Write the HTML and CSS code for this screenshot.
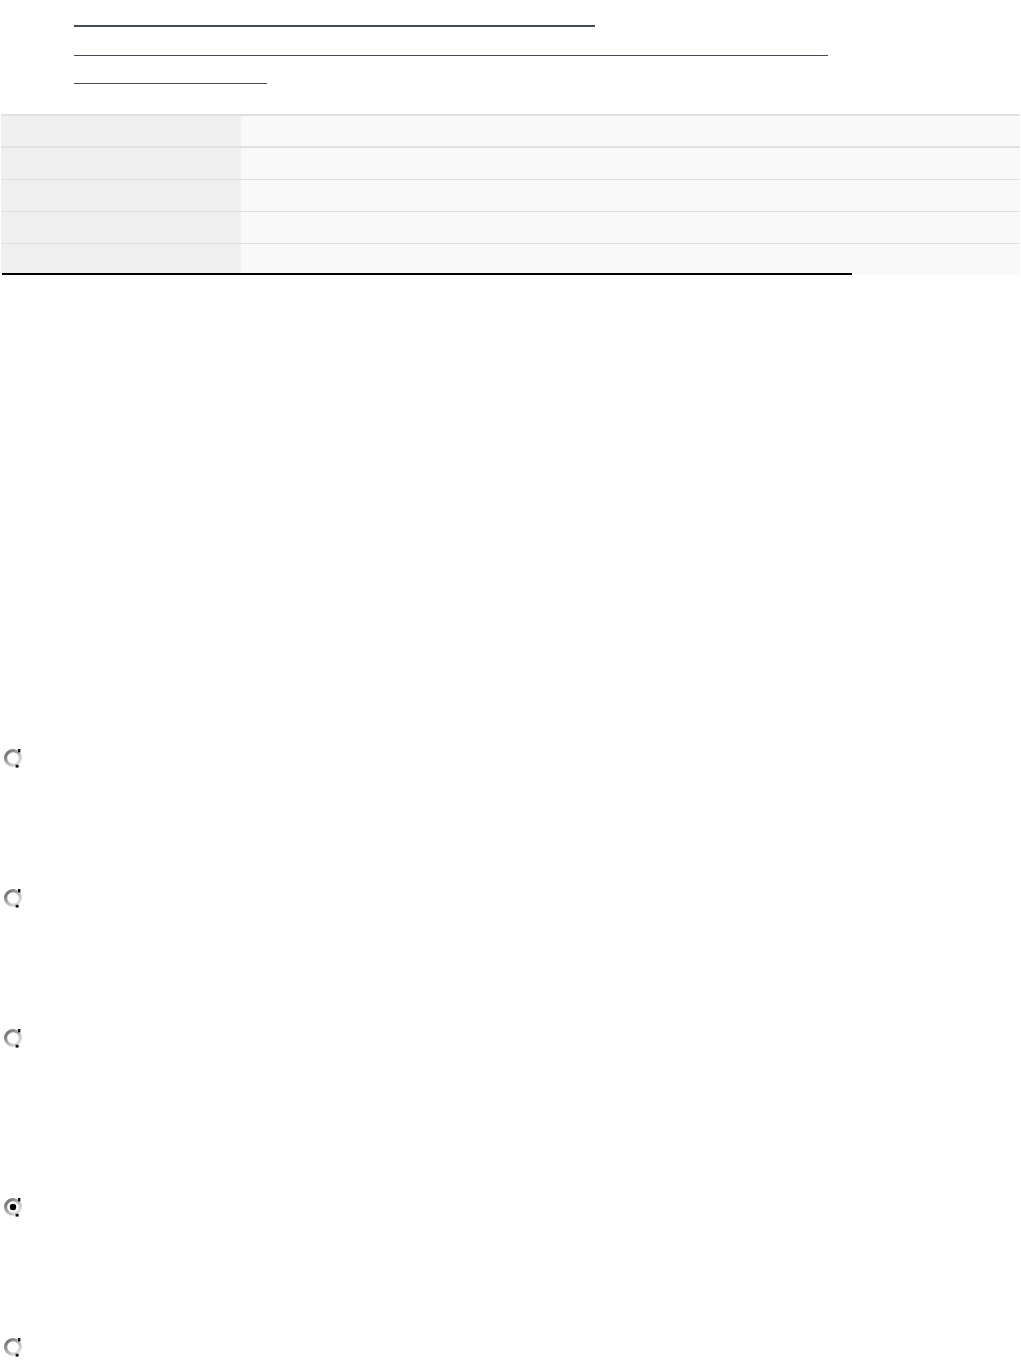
FILE: index.html
```html
<!DOCTYPE html>
<html lang="en">
<head>
<meta charset="utf-8">
<title>Page</title>
<link rel="stylesheet" href="styles.css">
</head>
<body>
<div class="links">
  <div class="rule rule-1"></div>
  <div class="rule rule-2"></div>
  <div class="rule rule-3"></div>
</div>

<div class="table">
  <div class="row head"><div class="cell key"></div><div class="cell val"></div></div>
  <div class="row"><div class="cell key"></div><div class="cell val"></div></div>
  <div class="row"><div class="cell key"></div><div class="cell val"></div></div>
  <div class="row"><div class="cell key"></div><div class="cell val"></div></div>
  <div class="row last"><div class="cell key"></div><div class="cell val"></div></div>
</div>
<div class="underbar"></div>

<div class="options">
  <div class="opt">
    <svg class="radio" viewBox="0 0 20 20" width="20" height="20"><defs><linearGradient id="g1" x1="0" y1="0" x2="1" y2="1"><stop offset="0" stop-color="#5e5e5e"/><stop offset="0.5" stop-color="#b4b4b4"/><stop offset="1" stop-color="#ededed"/></linearGradient></defs><circle cx="10" cy="10" r="7.4" fill="#fff" stroke="url(#g1)" stroke-width="3.2"/><rect x="15" y="1" width="2.4" height="3.4" fill="#111"/><rect x="12.6" y="16.8" width="3" height="2.8" fill="#111"/></svg>
  </div>
  <div class="opt">
    <svg class="radio" viewBox="0 0 20 20" width="20" height="20"><circle cx="10" cy="10" r="7.4" fill="#fff" stroke="url(#g1)" stroke-width="3.2"/><rect x="15" y="1" width="2.4" height="3.4" fill="#111"/><rect x="12.6" y="16.8" width="3" height="2.8" fill="#111"/></svg>
  </div>
  <div class="opt opt-tall">
    <svg class="radio" viewBox="0 0 20 20" width="20" height="20"><circle cx="10" cy="10" r="7.4" fill="#fff" stroke="url(#g1)" stroke-width="3.2"/><rect x="15" y="1" width="2.4" height="3.4" fill="#111"/><rect x="12.6" y="16.8" width="3" height="2.8" fill="#111"/></svg>
  </div>
  <div class="opt">
    <svg class="radio" viewBox="0 0 20 20" width="20" height="20"><circle cx="10" cy="10" r="7.4" fill="#fff" stroke="url(#g1)" stroke-width="3.2"/><circle cx="10" cy="10" r="3.2" fill="#000"/><rect x="15" y="1" width="2.4" height="3.4" fill="#111"/><rect x="12.6" y="16.8" width="3" height="2.8" fill="#111"/></svg>
  </div>
  <div class="opt opt-end">
    <svg class="radio" viewBox="0 0 20 20" width="20" height="20"><circle cx="10" cy="10" r="7.4" fill="#fff" stroke="url(#g1)" stroke-width="3.2"/><rect x="15" y="1" width="2.4" height="3.4" fill="#111"/><rect x="12.6" y="16.8" width="3" height="2.8" fill="#111"/></svg>
  </div>
</div>
</body>
</html>
```

FILE: styles.css
```css
html, body {
  margin: 0;
  padding: 0;
  background: #fff;
  font-family: "Liberation Sans", Arial, sans-serif;
}

.links {
  padding-left: 74px;
}

.rule {
  border-bottom-style: solid;
  border-bottom-color: #434a54;
}

.rule-1 {
  width: 521px;
  height: 25px;
  border-bottom-width: 2px;
}

.rule-2 {
  width: 754px;
  height: 28px;
  border-bottom-width: 1px;
}

.rule-3 {
  width: 193px;
  height: 27px;
  border-bottom-width: 1px;
}

.table {
  margin-top: 30px;
  margin-left: 1px;
  width: 1019px;
  border-top: 2px solid #dee2e6;
}

.row {
  display: grid;
  grid-template-columns: 240px 1fr;
  height: 31px;
  border-top: 1px solid #e0e0e0;
}

.row.head {
  height: 30px;
  border-top: 0;
  border-bottom: 2px solid #dee2e6;
}

.row.head + .row {
  border-top: 0;
}

.key {
  background: #efefef;
}

.val {
  background: #f9f9f9;
}

.underbar {
  position: relative;
  z-index: 1;
  margin-top: -2px;
  margin-left: 2px;
  width: 850px;
  height: 2px;
  background: #000;
}

.options {
  margin-top: 473px;
  padding-left: 3px;
  display: flex;
  flex-direction: column;
}

.opt {
  height: 140px;
}

.opt-tall {
  height: 169px;
}

.opt-end {
  height: auto;
}

.radio {
  display: block;
}
```
